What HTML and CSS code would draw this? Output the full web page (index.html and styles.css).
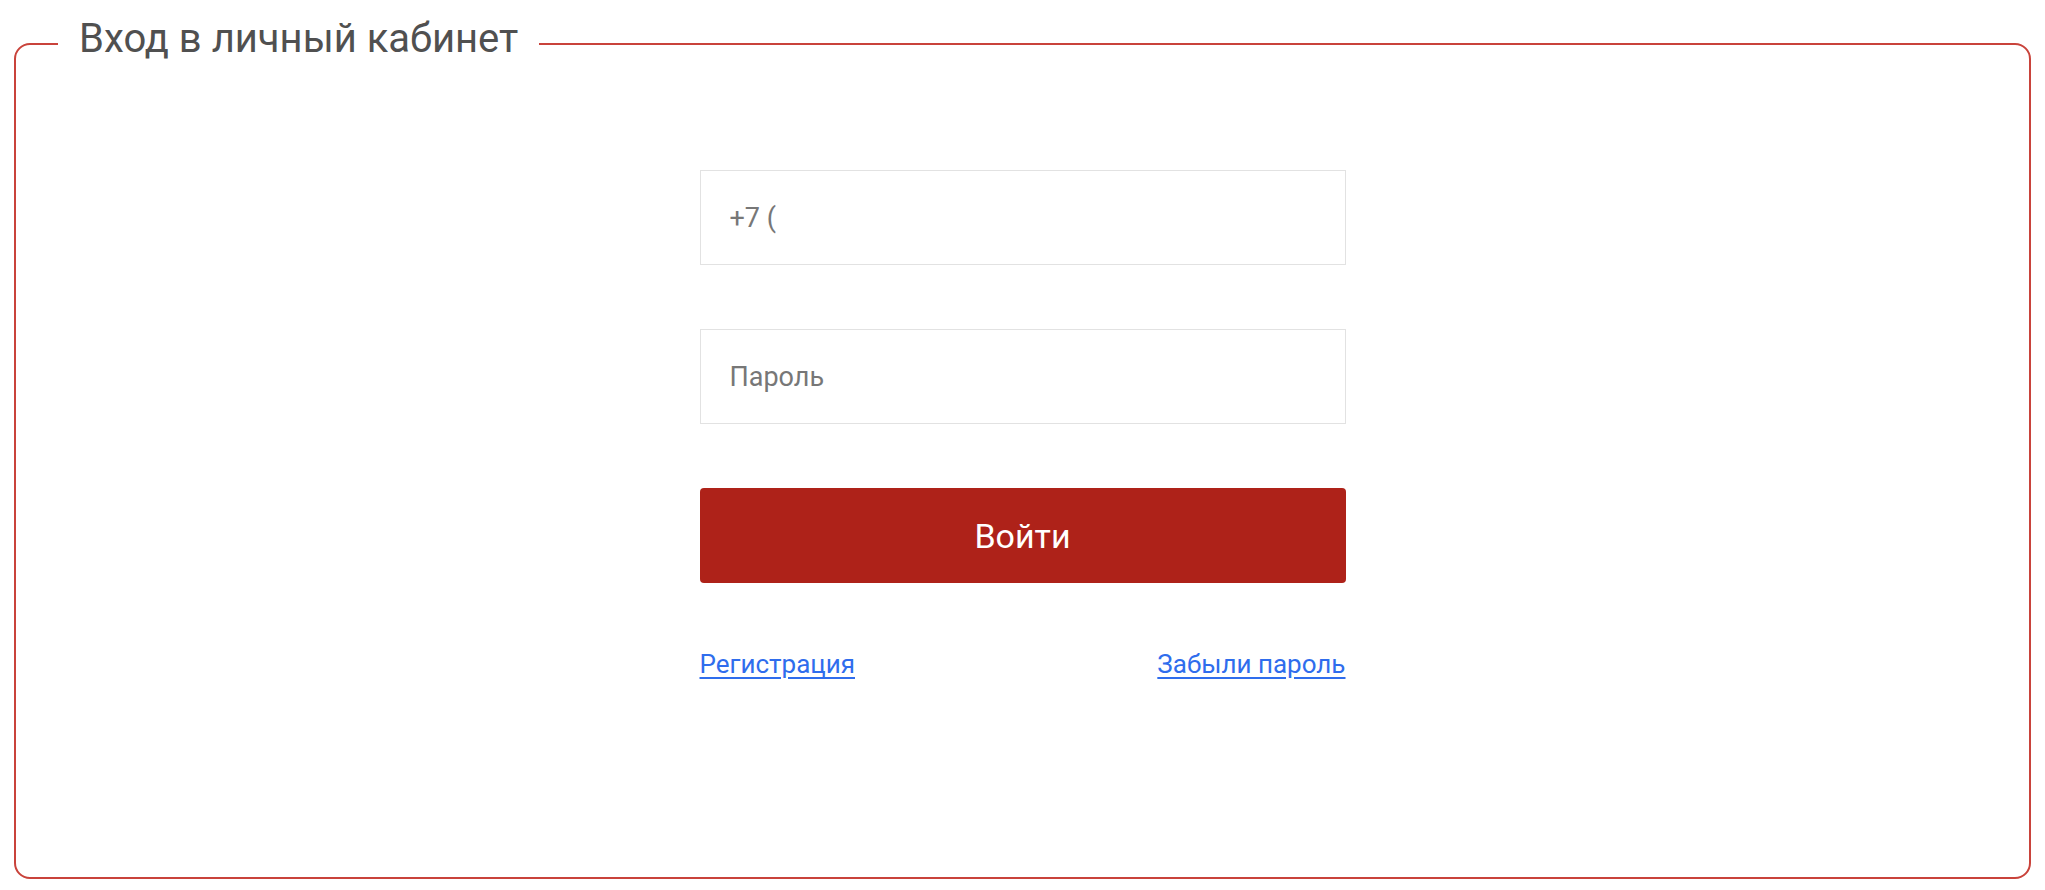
FILE: index.html
```html
<!DOCTYPE html>
<html lang="ru">
<head>
    <meta charset="UTF-8">
    <meta name="viewport" content="width=device-width, initial-scale=1.0">
    <title>Вход в личный кабинет</title>
    <link rel="stylesheet" href="styles.css">
</head>
<body>
    <!-- Login box -->
    <fieldset class="login-box">
        <legend class="login-title">Вход в личный кабинет</legend>
        <form class="login-form" id="loginForm">
            <input type="tel" class="login-input" name="phone" placeholder="+7 (">
            <input type="password" class="login-input" name="password" placeholder="Пароль">
            <button type="submit" class="login-btn">Войти</button>
            <div class="login-links">
                <a href="#" class="login-link">Регистрация</a>
                <a href="#" class="login-link">Забыли пароль</a>
            </div>
        </form>
    </fieldset>
</body>
</html>
```

FILE: styles.css
```css
html,
body {
    height: 100%;
}

body {
    margin: 0;
    padding: 14px 14px 11px 14px;
    box-sizing: border-box;
    display: flex;
    flex-direction: column;
    background: #fff;
    font-family: Roboto, "Noto Sans", Arial, sans-serif;
    color: #555;
}

.login-box {
    flex: 1;
    margin: 0;
    padding: 0;
    border: 2px solid #c9433b;
    border-radius: 16px;
    min-width: 0;
}

.login-title {
    margin-left: 42px;
    padding: 0 21px 10px;
    font-size: 40px;
    line-height: 50px;
    font-weight: 400;
    color: #505050;
}

.login-form {
    width: 646px;
    margin: 96px auto 0;
    display: flex;
    flex-direction: column;
}

.login-input {
    box-sizing: border-box;
    height: 95px;
    margin: 0 0 64px;
    padding: 0 29px;
    border: 1px solid #e2e2e2;
    border-radius: 0;
    background: #fff;
    font-family: inherit;
    font-size: 27px;
    color: #555;
    outline: none;
}

.login-input::placeholder {
    color: #777;
    opacity: 1;
}

.login-btn {
    height: 95px;
    border: none;
    border-radius: 4px;
    background-color: #ae2219;
    color: #fff;
    font-family: inherit;
    font-size: 34px;
    cursor: pointer;
}

.login-btn:hover {
    background-color: #9a1d15;
}

.login-links {
    display: flex;
    justify-content: space-between;
    margin-top: 64px;
    line-height: 34px;
}

.login-link {
    font-size: 26px;
    color: #2f6ded;
    text-decoration: underline;
    text-underline-offset: 4px;
}
```
